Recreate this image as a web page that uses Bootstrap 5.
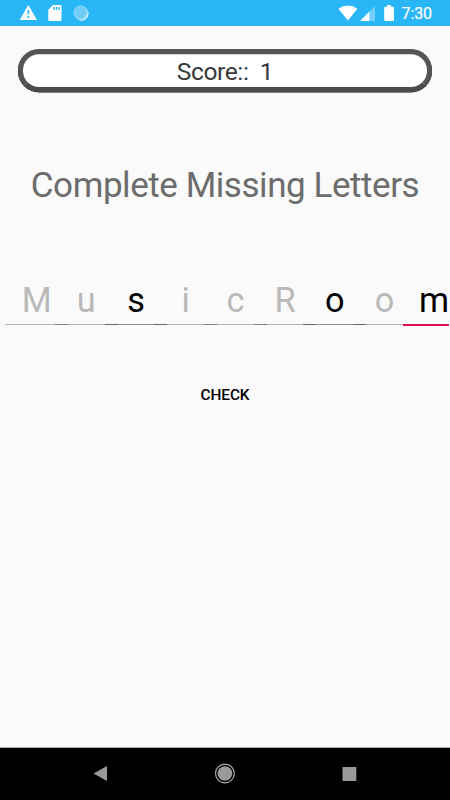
<!DOCTYPE html>
<html lang="en">
<head>
<meta charset="utf-8">
<meta name="viewport" content="width=device-width, initial-scale=1">
<title>Complete Missing Letters</title>
<link href="https://cdn.jsdelivr.net/npm/bootstrap@5.3.0/dist/css/bootstrap.min.css" rel="stylesheet">
<style>
body{font-family:Roboto,sans-serif;background:#fafafa;height:800px}
.status{height:26px;background:#29b6f6;padding:0 17px 0 19px}
.clock{font-size:16px;line-height:26px;margin:2px 1px 0 6px;letter-spacing:-.1px;-webkit-text-stroke:.2px #fff}
.score{height:42.5px;margin:23px 17.6px 0;border:5px solid #535557;border-bottom-color:#4b4c4d;border-radius:21px;background:#fff;color:#37393b;font-size:24.6px;line-height:36px;letter-spacing:-.4px;white-space:pre;box-shadow:inset 0 .5px 0 #aaa,0 .4px 0 #111}
.title{font-size:35px;line-height:42px;letter-spacing:-.44px;margin-top:73.5px;color:#6c6c6c;white-space:nowrap}
.letters{margin:71.5px 1.5px 0 5.3px;height:47px;overflow:hidden}
.slot{flex:0 0 62.7px;margin-right:-13px;height:46px;font-size:34.3px;line-height:42px;color:#b9b9b9;border-bottom:1.5px solid rgba(0,0,0,.29)}
.slot.filled{color:#000;border-bottom-color:rgba(0,0,0,.42)}
.slot.focused{height:47px;border-bottom:2px solid #e00f57}
.check{margin-top:53px;font-size:15.4px;line-height:20px;letter-spacing:-.1px;padding:6px 12px;border:0;color:#000;font-weight:500}
.navkeys{height:52px;padding:0 93px 0 92px;box-shadow:0 -1px 0 #aaa}
svg{display:block;flex:none}
</style>
<script src="https://cdn.jsdelivr.net/npm/bootstrap@5.3.0/dist/js/bootstrap.bundle.min.js"></script>
</head>
<body class="d-flex flex-column overflow-hidden m-0">
<header class="status d-flex align-items-center justify-content-between text-white">
  <svg width="72" height="26" viewBox="0 0 72 26" fill="#fff">
    <path fill-rule="evenodd" d="M9.3 5 18 20H.7ZM8.5 10v4.5h1.7V10ZM8.5 16v2h1.7v-2Z"/>
    <path fill-rule="evenodd" d="M34 5h7.2q1.3 0 1.3 1.3v13.4q0 1.3-1.3 1.3H30.6q-1.3 0-1.3-1.3V9.7ZM34.3 7v3h1.4V7Zm2.5 0v3h1.4V7Zm2.5 0v3h1.4V7Z"/>
    <circle cx="62.2" cy="13.2" r="7.1" fill="#9bdcfb"/>
    <circle cx="61.4" cy="12.4" r="6.5" fill="#70cbf7" stroke="#b5e5fc" stroke-width="1" stroke-dasharray="1 1"/>
    <path d="M69 11a7.3 7.3 0 0 1-10 9 8 8 0 0 0 10-9Z"/>
  </svg>
  <div class="d-flex align-items-center">
    <svg width="58" height="26" viewBox="338 0 58 26" fill="#fff">
      <path d="M338.4 8.8Q348 2 357.4 8.8L347.9 20.5Z"/>
      <path d="M375 6v15h-15Z" opacity=".35"/><path d="M369.3 11.7V21H360Z"/>
      <path d="M387 5h4v1.8h1.8q1.2 0 1.2 1.2v11.8q0 1.2-1.2 1.2h-7.4q-1.2 0-1.2-1.2V8q0-1.2 1.2-1.2H387Z"/>
    </svg>
    <span class="clock">7:30</span>
  </div>
</header>
<main class="flex-grow-1 d-flex flex-column">
  <div class="score text-center">Score::  1</div>
  <h1 class="title text-center fw-normal mb-0">Complete Missing Letters</h1>
  <div class="letters d-flex text-center">
    <div class="slot">M</div><div class="slot">u</div><div class="slot filled">s</div><div class="slot">i</div><div class="slot">c</div><div class="slot">R</div><div class="slot filled">o</div><div class="slot">o</div><div class="slot filled focused">m</div>
  </div>
  <button class="btn check align-self-center" type="button">CHECK</button>
</main>
<nav class="navkeys bg-black d-flex align-items-center justify-content-between" aria-label="System">
  <svg width="15" height="52" fill="#999"><path d="M1.5 25.5 15 18v15Z"/></svg>
  <svg width="22" height="52" viewBox="0 0 22 52"><circle cx="10.9" cy="25.5" r="9.4" fill="none" stroke="#aaa" stroke-width="1.2"/><circle cx="10.9" cy="25.5" r="7.3" fill="#999"/></svg>
  <svg width="15" height="52" fill="#999"><path d="M.5 19h13.8v14H.5Z"/></svg>
</nav>
</body>
</html>
